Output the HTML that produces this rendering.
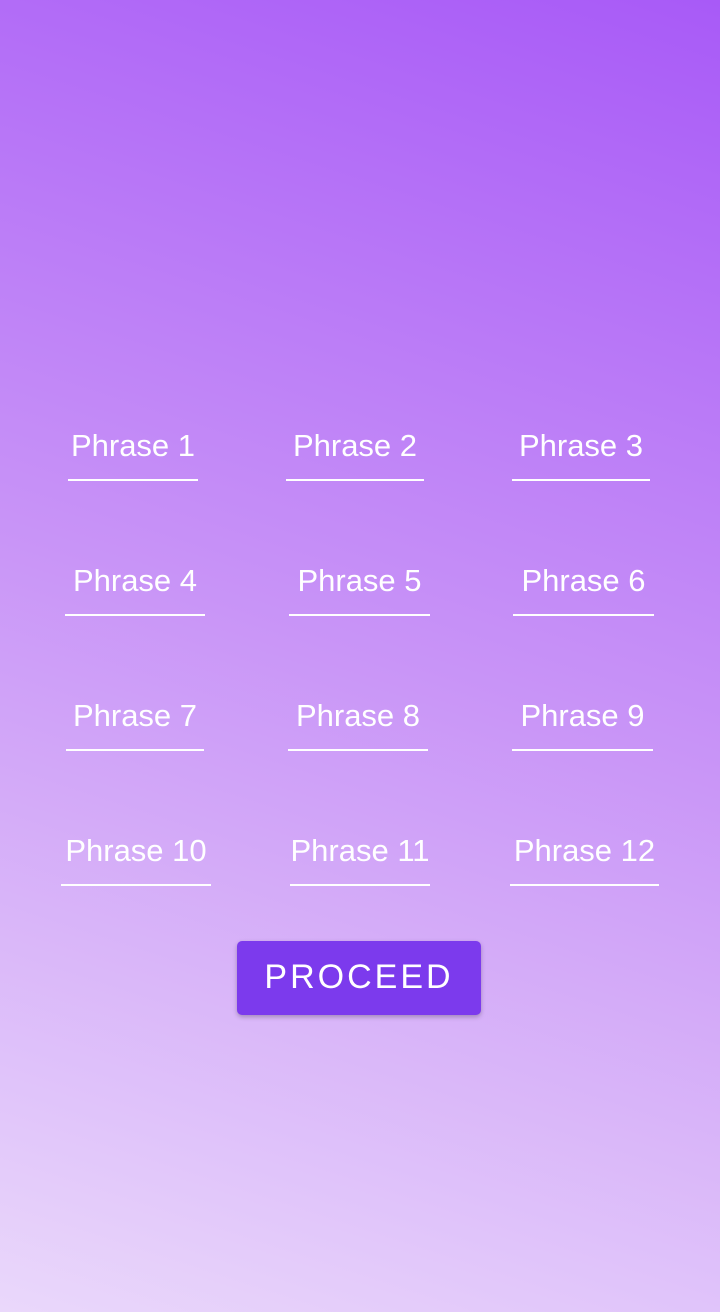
<!DOCTYPE html>
<html><head><style>
html,body{margin:0;padding:0}
body{width:720px;height:1312px;position:relative;overflow:hidden;
background:linear-gradient(18deg,#ead8fb 0%,#c995f7 50%,#a85af7 100%);
font-family:"Liberation Sans",sans-serif;color:#fff}
.p{position:absolute;text-align:center;font-size:31px;white-space:nowrap}
.p span{display:block;height:40px;line-height:40px}
.p i{display:block;height:2px;background:#fff;margin-top:13px}
.btn{position:absolute;left:237px;top:941px;width:244px;height:74px;background:#7c3aed;border-radius:5px;
box-shadow:0 2px 5px rgba(0,0,0,.25);text-align:center;line-height:72px;font-size:34px;letter-spacing:3px;}
</style></head><body>
<div class="p" style="left:68px;top:426px;width:130px"><span>Phrase 1</span><i></i></div>
<div class="p" style="left:286px;top:426px;width:138px"><span>Phrase 2</span><i></i></div>
<div class="p" style="left:512px;top:426px;width:138px"><span>Phrase 3</span><i></i></div>
<div class="p" style="left:65px;top:561px;width:140px"><span>Phrase 4</span><i></i></div>
<div class="p" style="left:289px;top:561px;width:141px"><span>Phrase 5</span><i></i></div>
<div class="p" style="left:513px;top:561px;width:141px"><span>Phrase 6</span><i></i></div>
<div class="p" style="left:66px;top:696px;width:138px"><span>Phrase 7</span><i></i></div>
<div class="p" style="left:288px;top:696px;width:140px"><span>Phrase 8</span><i></i></div>
<div class="p" style="left:512px;top:696px;width:141px"><span>Phrase 9</span><i></i></div>
<div class="p" style="left:61px;top:831px;width:150px"><span>Phrase 10</span><i></i></div>
<div class="p" style="left:290px;top:831px;width:140px"><span>Phrase 11</span><i></i></div>
<div class="p" style="left:510px;top:831px;width:149px"><span>Phrase 12</span><i></i></div>
<div class="btn">PROCEED</div>
</body></html>
